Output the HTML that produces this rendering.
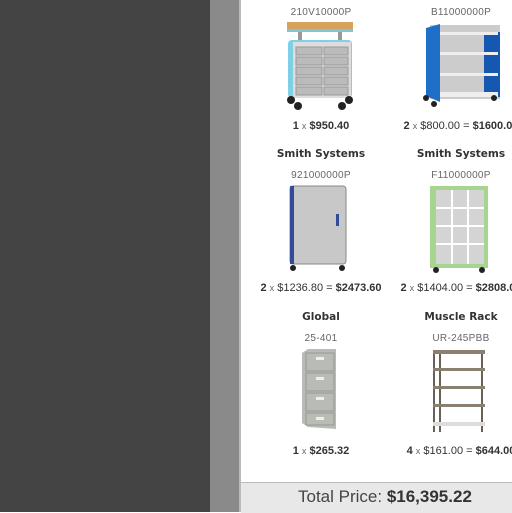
<!DOCTYPE html>
<html><head><style>
body{margin:0;width:512px;height:512px;overflow:hidden;background:#fff;font-family:"Liberation Sans",sans-serif;position:relative}
.a{position:absolute}
.t{position:absolute;width:150px;text-align:center;white-space:nowrap}
.code{font-size:10px;color:#666;letter-spacing:.3px}
.brand{font-size:10.5px;font-weight:bold;color:#333;font-family:"DejaVu Sans",sans-serif}
.price{font-size:11px;color:#333}
.price b{font-weight:bold}
.price s{text-decoration:none;font-size:9px;color:#666}
</style></head><body>
<div class="a" style="left:0;top:0;width:210px;height:512px;background:#444"></div>
<div class="a" style="left:210px;top:0;width:29px;height:512px;background:#8a8a8a"></div>
<div class="a" style="left:239px;top:0;width:2px;height:512px;background:#bbb"></div>

<div class="t code" style="left:246px;top:7px">210V10000P</div>
<div class="t code" style="left:386px;top:7px">B11000000P</div>
<svg class="a" style="left:284px;top:20px" width="74" height="90">
<rect x="3" y="2" width="66" height="8" fill="#d7a35a"/><rect x="3" y="9" width="66" height="3" fill="#7cc7dd"/>
<rect x="14" y="12" width="4" height="10" fill="#999"/><rect x="54" y="12" width="4" height="10" fill="#999"/>
<rect x="4" y="20" width="64" height="58" rx="4" fill="#7ed0e4"/><rect x="9" y="22" width="58" height="56" fill="#ddd"/>
<g fill="#bbb" stroke="#999"><rect x="12" y="27" width="26" height="8"/><rect x="12" y="37" width="26" height="8"/><rect x="12" y="47" width="26" height="8"/><rect x="12" y="57" width="26" height="8"/><rect x="12" y="67" width="26" height="8"/><rect x="40" y="27" width="24" height="8"/><rect x="40" y="37" width="24" height="8"/><rect x="40" y="47" width="24" height="8"/><rect x="40" y="57" width="24" height="8"/><rect x="40" y="67" width="24" height="8"/></g>
<circle cx="7" cy="80" r="4" fill="#222"/><circle cx="65" cy="80" r="4" fill="#222"/><circle cx="14" cy="86" r="4" fill="#222"/><circle cx="58" cy="86" r="4" fill="#222"/>
</svg>
<svg class="a" style="left:422px;top:22px" width="80" height="88">
<rect x="8" y="3" width="70" height="74" fill="#ccc"/>
<polygon points="4,6 18,2 18,80 4,74" fill="#1e6fc8"/><rect x="62" y="10" width="16" height="65" fill="#1658b0"/>
<rect x="18" y="10" width="58" height="3" fill="#eee"/><rect x="18" y="30" width="58" height="3" fill="#eee"/><rect x="18" y="51" width="58" height="3" fill="#eee"/><rect x="18" y="70" width="58" height="5" fill="#eee"/>
<circle cx="4" cy="76" r="3" fill="#222"/><circle cx="12" cy="82" r="3" fill="#222"/><circle cx="72" cy="76" r="3" fill="#222"/>
</svg>
<div class="t price" style="left:246px;top:120px"><b>1</b> <s>x</s> <b>$950.40</b></div>
<div class="t price" style="left:386px;top:120px"><b>2</b> <s>x</s> $800.00 = <b>$1600.00</b></div>

<div class="t brand" style="left:246px;top:148px">Smith Systems</div>
<div class="t brand" style="left:386px;top:148px">Smith Systems</div>
<div class="t code" style="left:246px;top:170px">921000000P</div>
<div class="t code" style="left:386px;top:170px">F11000000P</div>
<svg class="a" style="left:286px;top:184px" width="64" height="90">
<rect x="4" y="2" width="56" height="78" rx="3" fill="#c8c8c8" stroke="#888"/><rect x="4" y="2" width="4" height="78" fill="#334c99"/>
<rect x="50" y="30" width="3" height="12" fill="#334c99"/>
<circle cx="7" cy="84" r="3" fill="#222"/><circle cx="56" cy="84" r="3" fill="#222"/>
</svg>
<svg class="a" style="left:426px;top:184px" width="66" height="90">
<rect x="4" y="2" width="58" height="82" fill="#a7d48e"/><rect x="10" y="6" width="48" height="74" fill="#d4d4d4"/>
<g stroke="#fff" stroke-width="2"><line x1="26" y1="6" x2="26" y2="80"/><line x1="42" y1="6" x2="42" y2="80"/><line x1="10" y1="24" x2="58" y2="24"/><line x1="10" y1="42" x2="58" y2="42"/><line x1="10" y1="60" x2="58" y2="60"/></g>
<circle cx="10" cy="86" r="3" fill="#222"/><circle cx="56" cy="86" r="3" fill="#222"/>
</svg>
<div class="t price" style="left:246px;top:282px"><b>2</b> <s>x</s> $1236.80 = <b>$2473.60</b></div>
<div class="t price" style="left:386px;top:282px"><b>2</b> <s>x</s> $1404.00 = <b>$2808.00</b></div>

<div class="t brand" style="left:246px;top:311px">Global</div>
<div class="t brand" style="left:386px;top:311px">Muscle Rack</div>
<div class="t code" style="left:246px;top:333px">25-401</div>
<div class="t code" style="left:386px;top:333px">UR-245PBB</div>
<svg class="a" style="left:300px;top:347px" width="40" height="86">
<polygon points="8,2 36,2 36,82 8,80 2,76 2,6" fill="#b8bcb5"/><g stroke="#999" fill="none"><rect x="6" y="6" width="28" height="18"/><rect x="6" y="26" width="28" height="18"/><rect x="6" y="46" width="28" height="18"/><rect x="6" y="66" width="28" height="12"/></g>
<g fill="#eee"><rect x="16" y="10" width="8" height="3"/><rect x="16" y="30" width="8" height="3"/><rect x="16" y="50" width="8" height="3"/><rect x="16" y="70" width="8" height="3"/></g>
</svg>
<svg class="a" style="left:430px;top:348px" width="58" height="86">
<g stroke="#6b6055" stroke-width="2"><line x1="4" y1="2" x2="4" y2="84"/><line x1="10" y1="6" x2="10" y2="84"/><line x1="52" y1="2" x2="52" y2="84"/></g>
<g fill="#8a8070"><rect x="3" y="2" width="52" height="4"/><rect x="3" y="20" width="52" height="3"/><rect x="3" y="38" width="52" height="3"/><rect x="3" y="56" width="52" height="3"/><rect x="3" y="74" width="52" height="4" fill="#ddd"/></g>
</svg>
<div class="t price" style="left:246px;top:445px"><b>1</b> <s>x</s> <b>$265.32</b></div>
<div class="t price" style="left:386px;top:445px"><b>4</b> <s>x</s> $161.00 = <b>$644.00</b></div>

<div class="a" style="left:241px;top:482px;width:271px;height:30px;background:#e8e8e8;border-top:1px solid #bbb"></div>
<div class="a" style="left:241px;top:487px;width:300px;font-size:17px;color:#444;white-space:nowrap;padding-left:57px">Total Price: <b style="color:#333">$16,395.22</b></div>
</body></html>
